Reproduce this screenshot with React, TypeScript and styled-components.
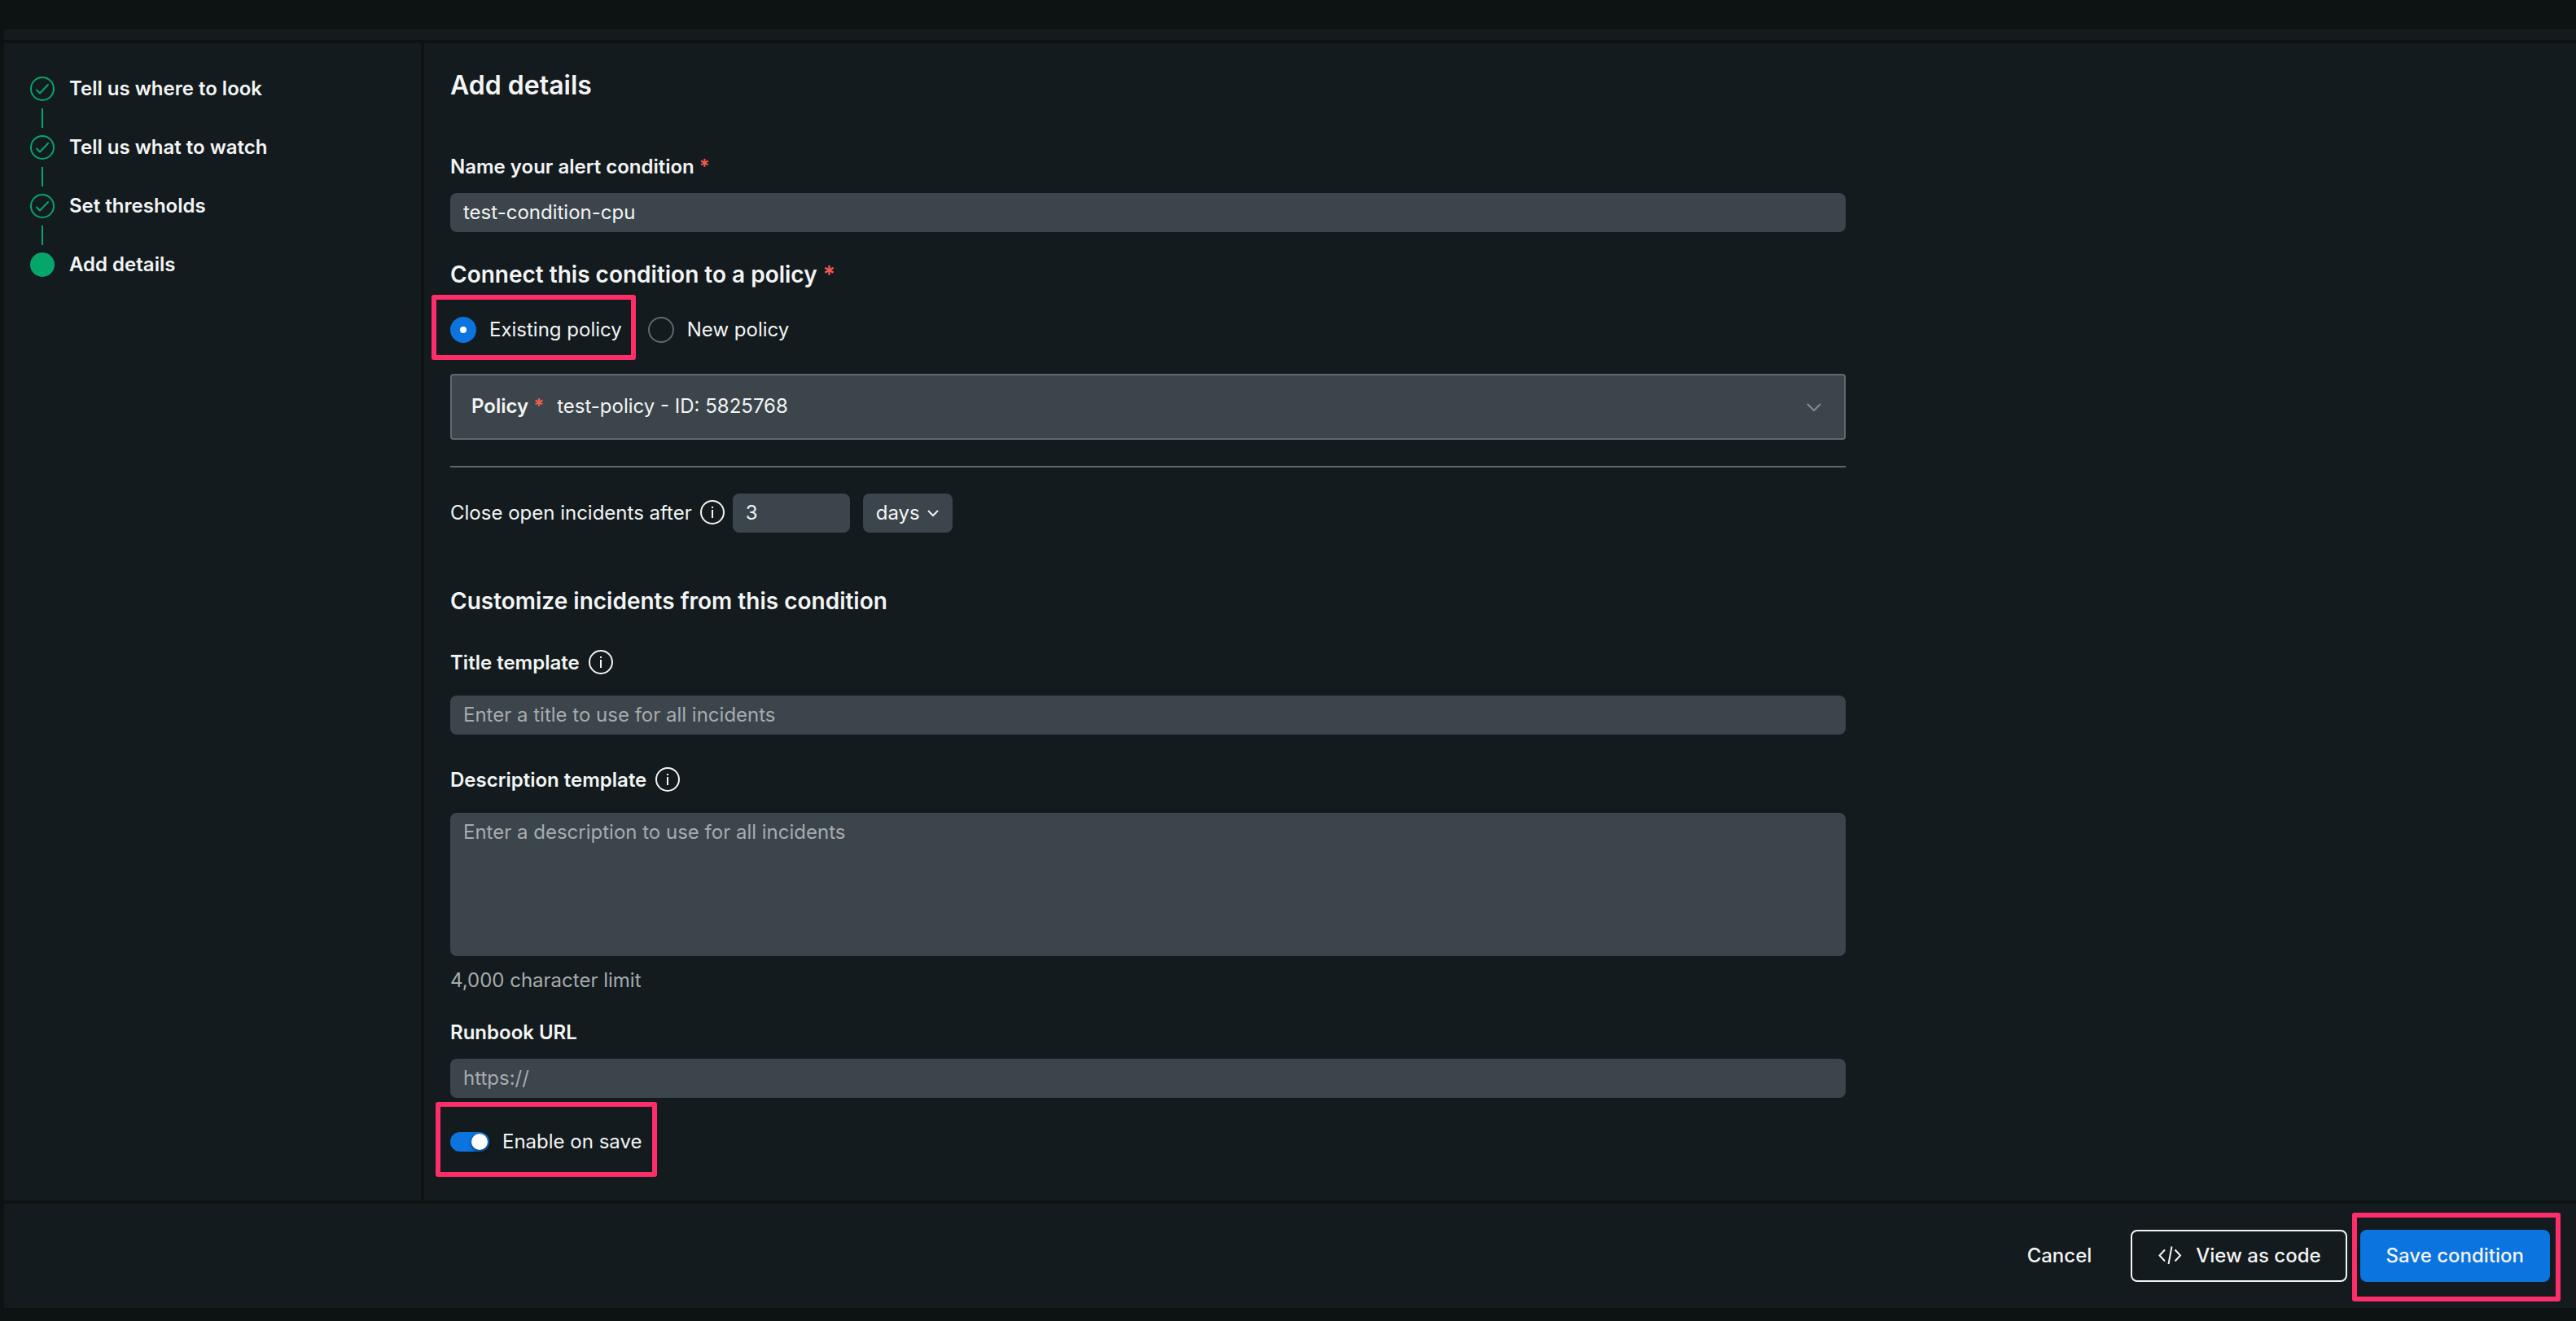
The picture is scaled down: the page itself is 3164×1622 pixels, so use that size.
import React, { useState } from "react";
import styled, { createGlobalStyle, css } from "styled-components";

const color = {
  page: "#0d1312",
  panel: "#131b1e",
  field: "#3b454b",
  line: "#5f696f",
  text: "#f3f4f4",
  muted: "#a7abae",
  green: "#06a66b",
  blue: "#0c74df",
  red: "#f15c50",
  pink: "#ff2d69",
};

const GlobalStyle = createGlobalStyle`
  * { box-sizing: border-box; }
  body { margin: 0; background: ${color.page}; }
  body, input, textarea, select, button {
    font-family: Inter, "Liberation Sans", sans-serif;
    font-size: 24px;
    line-height: 32px;
    color: ${color.text};
  }
`;

const Page = styled.div`
  display: flex;
  flex-direction: column;
  gap: 4px;
  min-height: 100vh;
  padding: 36px 0 16px 5px;
`;

const TopStrip = styled.div`
  height: 13px;
  background: ${color.panel};
`;

const Columns = styled.div`
  flex: 1;
  display: grid;
  grid-template-columns: 512px 1fr;
  gap: 4px;
`;

const Sidebar = styled.nav`
  padding: 41px 32px;
  background: ${color.panel};
`;

const Steps = styled.ol`
  margin: 0;
  padding: 0;
  list-style: none;
`;

const Step = styled.li`
  &:not(:last-child)::after {
    content: "";
    display: block;
    width: 2px;
    height: 24px;
    margin: 9px 14px;
    background: ${color.green};
  }
`;

const StepLink = styled.a`
  display: flex;
  align-items: center;
  gap: 18px;
  height: 30px;
  font-weight: 600;
  color: inherit;
  text-decoration: none;
`;

const Main = styled.main`
  display: grid;
  grid-template-columns: repeat(3, 1fr);
  column-gap: 16px;
  align-items: start;
  padding: 32px;
  background: ${color.panel};
`;

const Form = styled.form`
  grid-column: span 2;
  display: flex;
  flex-direction: column;
`;

const Title = styled.h1`
  margin: 0 0 64px;
  font-size: 32px;
  line-height: 40px;
  font-weight: 600;
`;

const SectionTitle = styled.h2<{ $top: number; $bottom: number }>`
  margin: ${(p) => p.$top}px 0 ${(p) => p.$bottom}px;
  font-size: 28px;
  line-height: 40px;
  font-weight: 600;
`;

const LabelRow = styled.div<{ $top?: number; $bottom: number }>`
  display: flex;
  align-items: center;
  gap: 10px;
  margin: ${(p) => p.$top ?? 0}px 0 ${(p) => p.$bottom}px;
`;

const FieldLabel = styled.label`
  font-weight: 600;
`;

const Star = styled.span`
  color: ${color.red};
`;

const fieldStyle = css`
  border: 0;
  border-radius: 8px;
  background: ${color.field};
  outline: none;
  &::placeholder {
    color: ${color.muted};
    opacity: 1;
  }
`;

const TextInput = styled.input<{ $width?: string }>`
  ${fieldStyle}
  width: ${(p) => p.$width ?? "100%"};
  height: 48px;
  padding: 0 16px 2px;
`;

const TextArea = styled.textarea`
  ${fieldStyle}
  height: 176px;
  padding: 8px 16px;
  resize: none;
`;

const RadioRow = styled.div`
  display: flex;
  gap: 32px;
`;

const ChoiceLabel = styled.label`
  position: relative;
  display: flex;
  align-items: center;
  align-self: flex-start;
  gap: 16px;
`;

const Radio = styled.input`
  appearance: none;
  display: grid;
  place-items: center;
  width: 32px;
  height: 32px;
  margin: 0;
  border: 2px solid ${color.line};
  border-radius: 50%;
  &:checked {
    border-color: ${color.blue};
    background: ${color.blue};
  }
  &:checked::before {
    content: "";
    width: 8px;
    height: 8px;
    border-radius: 50%;
    background: #fff;
  }
`;

const Switch = styled.input`
  appearance: none;
  display: flex;
  width: 48px;
  height: 24px;
  margin: 0;
  padding: 2px;
  border-radius: 12px;
  background: ${color.line};
  &::before {
    content: "";
    width: 20px;
    height: 20px;
    border-radius: 50%;
    background: #fff;
    box-shadow: 0 2px 4px rgba(0, 0, 0, 0.5);
  }
  &:checked {
    justify-content: flex-end;
    background: ${color.blue};
  }
`;

const SwitchRow = styled.div`
  display: flex;
  margin-top: 38px;
`;

const Highlight = styled.span<{ $inset: string }>`
  position: absolute;
  inset: ${(p) => p.$inset};
  border: 6px solid ${color.pink};
  border-radius: 3px;
  pointer-events: none;
`;

const PolicyBox = styled.div`
  display: flex;
  align-items: center;
  gap: 16px;
  height: 81px;
  margin-top: 38px;
  padding: 0 24px 2px;
  border: 2px solid ${color.line};
  border-radius: 4px;
  background: ${color.field};
`;

const SelectCell = styled.div<{ $grow?: boolean }>`
  display: grid;
  align-items: center;
  flex: ${(p) => (p.$grow ? 1 : "none")};
  & > * {
    grid-area: 1 / 1;
  }
  & > svg {
    justify-self: end;
    pointer-events: none;
  }
`;

const PolicySelect = styled.select`
  appearance: none;
  width: 100%;
  padding: 0;
  border: 0;
  background: transparent;
`;

const UnitSelect = styled.select`
  ${fieldStyle}
  appearance: none;
  width: 110px;
  height: 48px;
  padding: 0 16px;
`;

const UnitChevron = styled.svg`
  margin-right: 16px;
`;

const Divider = styled.hr`
  width: 100%;
  height: 2px;
  margin: 32px 0;
  border: 0;
  background: ${color.line};
`;

const CloseRow = styled.div`
  display: flex;
  align-items: center;
  gap: 16px;
`;

const CloseField = styled.div`
  display: flex;
  align-items: center;
  gap: 9px;
`;

const Hint = styled.p`
  margin: 14px 0 0;
  color: ${color.muted};
`;

const Footer = styled.footer`
  display: flex;
  justify-content: flex-end;
  gap: 16px;
  padding: 32px;
  background: ${color.panel};
`;

const Button = styled.button<{ $kind: "plain" | "outline" | "primary" }>`
  position: relative;
  display: flex;
  align-items: center;
  gap: 16px;
  height: 64px;
  padding: 0 ${(p) => (p.$kind === "outline" ? 30 : 32)}px;
  border: ${(p) => (p.$kind === "outline" ? `2px solid ${color.text}` : "0")};
  border-radius: 8px;
  background: ${(p) => (p.$kind === "primary" ? color.blue : "transparent")};
  font-weight: 500;
`;

const CheckIcon = () => (
  <svg width="30" height="30" viewBox="0 0 30 30" fill="none" stroke={color.green} strokeWidth="2" aria-hidden="true">
    <circle cx="15" cy="15" r="14" />
    <path d="M8 16.5l4 4 10-10.5" strokeLinecap="round" strokeLinejoin="round" />
  </svg>
);

const CurrentIcon = () => (
  <svg width="30" height="30" viewBox="0 0 30 30" aria-hidden="true">
    <circle cx="15" cy="15" r="15" fill={color.green} />
  </svg>
);

const InfoIcon = () => (
  <svg width="32" height="32" viewBox="0 0 32 32" role="img" aria-label="More information">
    <circle cx="16" cy="15" r="14" fill="none" stroke={color.text} strokeWidth="2" />
    <path d="M15 8h2v2h-2zM15 12h2v10h-2z" fill={color.text} />
  </svg>
);

const CodeIcon = () => (
  <svg width="32" height="32" viewBox="0 0 32 32" fill="none" stroke={color.text} strokeWidth="2" aria-hidden="true">
    <path d="M10 8.5L3.5 15.5l6.5 7M22.5 8.5L29 15.5l-6.5 7M18.5 4.5L14.5 26" />
  </svg>
);

const steps = ["Tell us where to look", "Tell us what to watch", "Set thresholds", "Add details"];

export default function App() {
  const [name, setName] = useState("test-condition-cpu");
  const [policy, setPolicy] = useState("existing");
  const [amount, setAmount] = useState("3");
  const [enabled, setEnabled] = useState(true);

  return (
    <>
      <GlobalStyle />
      <Page>
        <TopStrip />
        <Columns>
          <Sidebar aria-label="Steps">
            <Steps>
              {steps.map((step, i) => (
                <Step key={step}>
                  <StepLink href="#" aria-current={i === steps.length - 1 ? "step" : undefined}>
                    {i === steps.length - 1 ? <CurrentIcon /> : <CheckIcon />}
                    {step}
                  </StepLink>
                </Step>
              ))}
            </Steps>
          </Sidebar>
          <Main>
            <Form id="details" onSubmit={(e) => e.preventDefault()}>
              <Title>Add details</Title>
              <LabelRow $bottom={16}>
                <FieldLabel htmlFor="name">
                  Name your alert condition <Star>*</Star>
                </FieldLabel>
              </LabelRow>
              <TextInput id="name" value={name} onChange={(e) => setName(e.target.value)} />

              <SectionTitle $top={32} $bottom={32}>
                Connect this condition to a policy <Star>*</Star>
              </SectionTitle>
              <RadioRow>
                <ChoiceLabel>
                  <Radio
                    type="radio"
                    name="policy-kind"
                    checked={policy === "existing"}
                    onChange={() => setPolicy("existing")}
                  />
                  Existing policy
                  <Highlight $inset="-27px -17px -21px -23px" />
                </ChoiceLabel>
                <ChoiceLabel>
                  <Radio type="radio" name="policy-kind" checked={policy === "new"} onChange={() => setPolicy("new")} />
                  New policy
                </ChoiceLabel>
              </RadioRow>

              <PolicyBox>
                <FieldLabel htmlFor="policy">
                  Policy <Star>*</Star>
                </FieldLabel>
                <SelectCell $grow>
                  <PolicySelect id="policy">
                    <option>test-policy - ID: 5825768</option>
                  </PolicySelect>
                  <svg width="24" height="12" viewBox="0 0 24 12" fill="none" stroke="#858d92" strokeWidth="2" aria-hidden="true">
                    <path d="M3 3l8 8 8-8" />
                  </svg>
                </SelectCell>
              </PolicyBox>
              <Divider />

              <CloseRow>
                <CloseField>
                  <label htmlFor="amount">Close open incidents after</label>
                  <InfoIcon />
                  <TextInput id="amount" $width="144px" value={amount} onChange={(e) => setAmount(e.target.value)} />
                </CloseField>
                <SelectCell>
                  <UnitSelect aria-label="Unit of time">
                    <option>days</option>
                  </UnitSelect>
                  <UnitChevron width="16" height="10" viewBox="0 0 16 10" fill="none" stroke={color.text} strokeWidth="2" aria-hidden="true">
                    <path d="M2 2l6 6 6-6" />
                  </UnitChevron>
                </SelectCell>
              </CloseRow>

              <SectionTitle $top={64} $bottom={40}>
                Customize incidents from this condition
              </SectionTitle>
              <LabelRow $bottom={24}>
                <FieldLabel htmlFor="title">Title template</FieldLabel>
                <InfoIcon />
              </LabelRow>
              <TextInput id="title" placeholder="Enter a title to use for all incidents" />
              <LabelRow $top={40} $bottom={24}>
                <FieldLabel htmlFor="description">Description template</FieldLabel>
                <InfoIcon />
              </LabelRow>
              <TextArea id="description" placeholder="Enter a description to use for all incidents" />
              <Hint>4,000 character limit</Hint>
              <LabelRow $top={32} $bottom={16}>
                <FieldLabel htmlFor="runbook">Runbook URL</FieldLabel>
              </LabelRow>
              <TextInput id="runbook" placeholder="https://" />
              <SwitchRow>
                <ChoiceLabel>
                  <Switch
                    type="checkbox"
                    role="switch"
                    checked={enabled}
                    onChange={(e) => setEnabled(e.target.checked)}
                  />
                  Enable on save
                  <Highlight $inset="-33px -19px -27px -18px" />
                </ChoiceLabel>
              </SwitchRow>
            </Form>
          </Main>
        </Columns>
        <Footer>
          <Button type="button" $kind="plain">
            Cancel
          </Button>
          <Button type="button" $kind="outline">
            <CodeIcon />
            View as code
          </Button>
          <Button type="submit" form="details" $kind="primary">
            Save condition
            <Highlight $inset="-21px -13px -24px -10px" />
          </Button>
        </Footer>
      </Page>
    </>
  );
}
